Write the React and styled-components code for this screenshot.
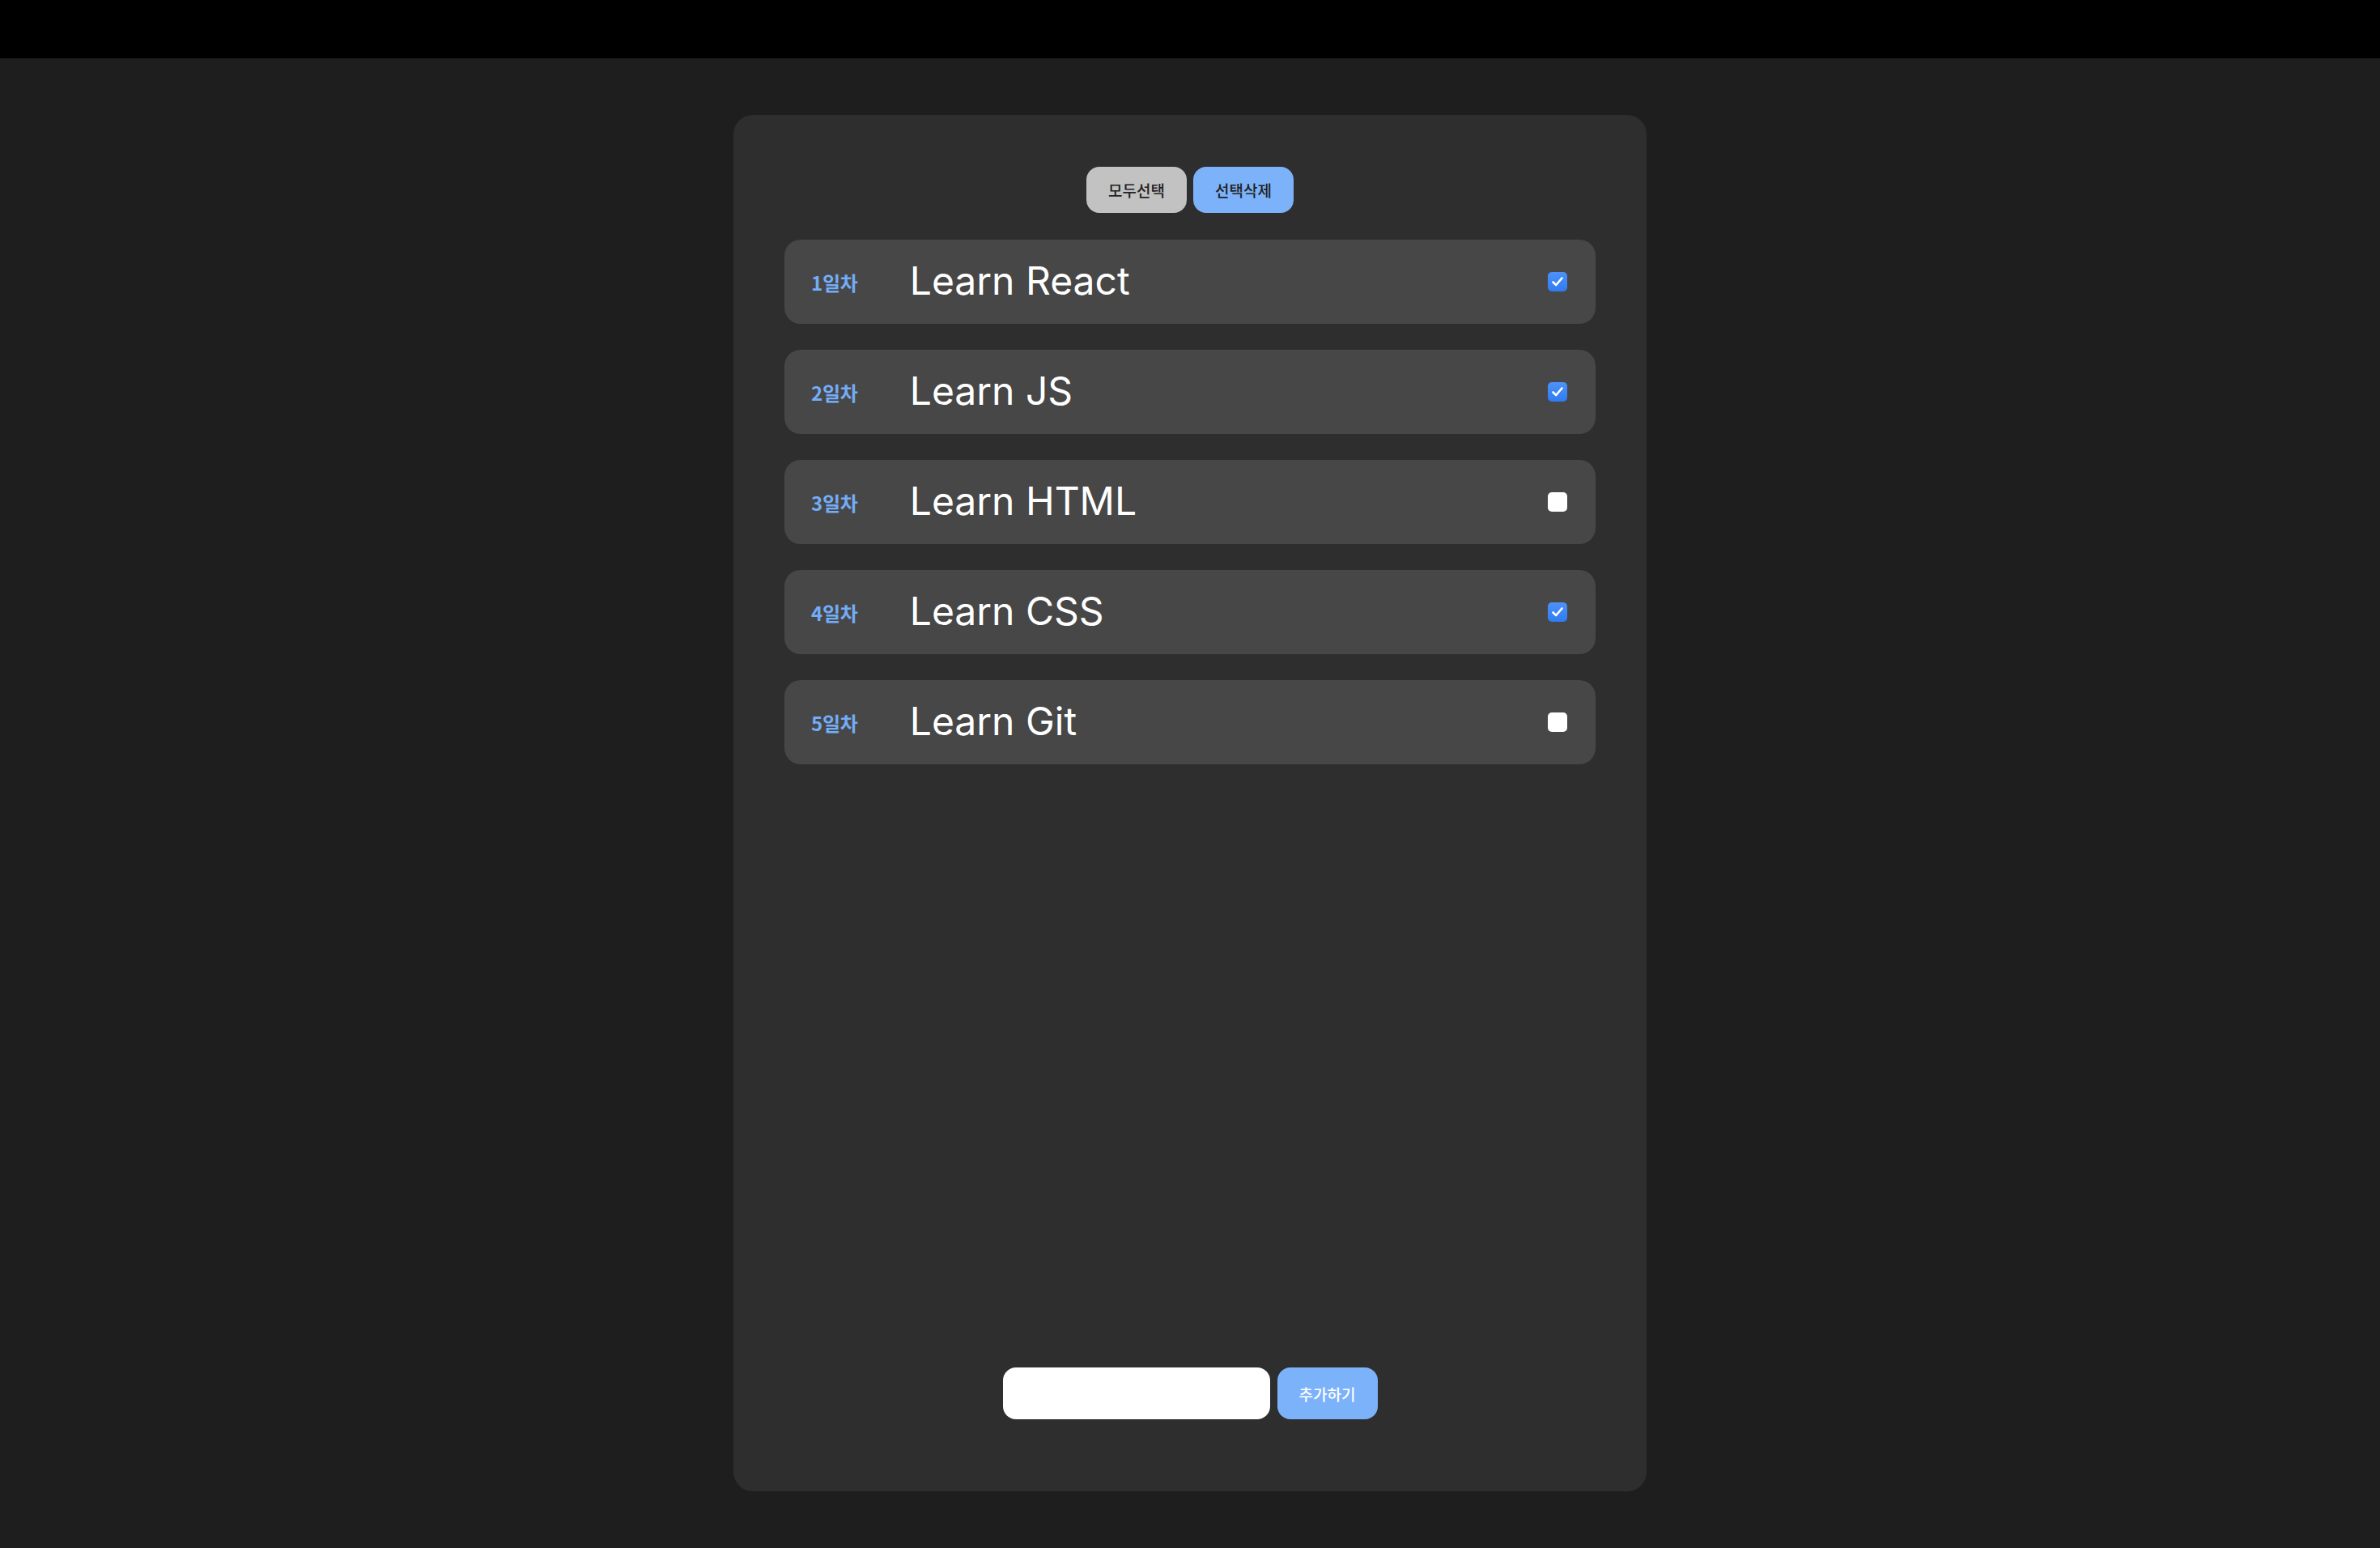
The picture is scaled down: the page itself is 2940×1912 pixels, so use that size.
import React from "react";
import styled, { createGlobalStyle } from "styled-components";

const Global = createGlobalStyle`
  html, body { margin: 0; padding: 0; background: #1e1e1e; }
  * { box-sizing: border-box; }
`;

const Page = styled.div`
  min-height: 1912px;
  background: #1e1e1e;
  display: flex;
  flex-direction: column;
`;

const TopBar = styled.div`
  height: 72px;
  background: #000;
`;

const Main = styled.main`
  display: flex;
  justify-content: center;
  padding-top: 70px;
`;

const Panel = styled.section`
  width: 1128px;
  height: 1700px;
  background: #2e2e2e;
  border-radius: 24px;
  padding: 64px 63px 89px;
  display: flex;
  flex-direction: column;
`;

const Toolbar = styled.div`
  display: flex;
  justify-content: center;
  gap: 8px;
`;

const Button = styled.button`
  height: ${(p) => (p.$tall ? "64px" : "57px")};
  padding: 0 24px;
  min-width: 124px;
  border: none;
  border-radius: 16px;
  background: ${(p) => (p.$variant === "gray" ? "#c2c2c2" : "#7cb2fa")};
  color: ${(p) => (p.$light ? "#ffffff" : "#222222")};
  font-family: "Noto Sans CJK KR", "Noto Sans", sans-serif;
  font-size: 19px;
  font-weight: 500;
  cursor: pointer;
`;

const List = styled.ul`
  list-style: none;
  margin: 33px 0 0;
  padding: 0;
  display: flex;
  flex-direction: column;
  gap: 32px;
  flex: 1;
`;

const Row = styled.li`
  height: 104px;
  background: #474747;
  border-radius: 20px;
  display: flex;
  align-items: center;
  padding: 0 35px 0 33px;
`;

const Day = styled.span`
  font-family: "Noto Sans CJK KR", "Noto Sans", sans-serif;
  font-size: 24px;
  font-weight: 600;
  color: #74acf6;
  letter-spacing: -0.2px;
  margin-right: 64px;
`;

const Title = styled.span`
  font-family: Inter, "Noto Sans", sans-serif;
  font-size: 48px;
  font-weight: 400;
  color: #ffffff;
  flex: 1;
  margin-bottom: 4px;
`;

const Check = styled.span`
  width: 24px;
  height: 24px;
  border-radius: 5px;
  background: ${(p) => (p.$checked ? "linear-gradient(#4d92f8, #2f7bf2)" : "#ffffff")};
  display: flex;
  align-items: center;
  justify-content: center;
`;

const Form = styled.form`
  display: flex;
  justify-content: center;
  gap: 9px;
`;

const Input = styled.input`
  width: 330px;
  height: 64px;
  border: none;
  border-radius: 16px;
  background: #ffffff;
  outline: none;
  padding: 0 16px;
  font-size: 20px;
`;

const todos = [
  { day: "1일차", text: "Learn React", done: true },
  { day: "2일차", text: "Learn JS", done: true },
  { day: "3일차", text: "Learn HTML", done: false },
  { day: "4일차", text: "Learn CSS", done: true },
  { day: "5일차", text: "Learn Git", done: false },
];

export default function App() {
  return (
    <Page>
      <Global />
      <TopBar />
      <Main>
        <Panel>
          <Toolbar>
            <Button $variant="gray">모두선택</Button>
            <Button $variant="blue">선택삭제</Button>
          </Toolbar>
          <List>
            {todos.map((t) => (
              <Row key={t.day}>
                <Day>{t.day}</Day>
                <Title>{t.text}</Title>
                <Check $checked={t.done}>
                  {t.done && (
                    <svg width="18" height="18" viewBox="0 0 18 18">
                      <path
                        d="M3.5 9.5 L7.2 13 L14.5 4.5"
                        fill="none"
                        stroke="#fff"
                        strokeWidth="2.6"
                        strokeLinecap="round"
                        strokeLinejoin="round"
                      />
                    </svg>
                  )}
                </Check>
              </Row>
            ))}
          </List>
          <Form onSubmit={(e) => e.preventDefault()}>
            <Input />
            <Button $variant="blue" $light $tall type="submit">추가하기</Button>
          </Form>
        </Panel>
      </Main>
    </Page>
  );
}
